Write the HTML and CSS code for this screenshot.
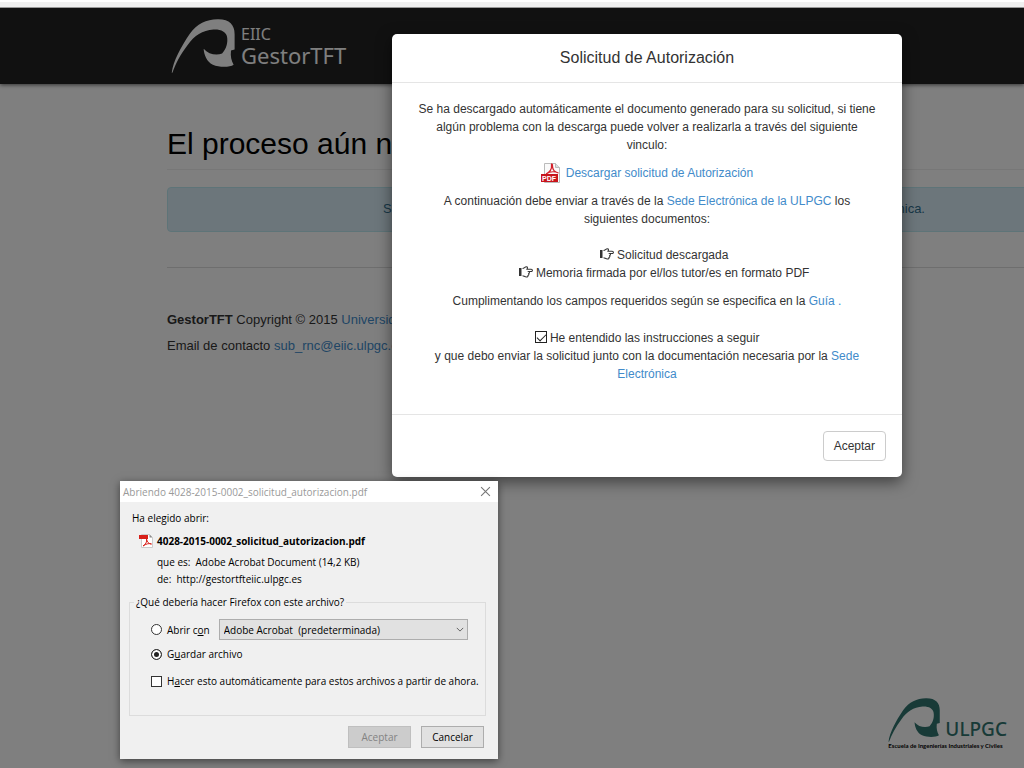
FILE: index.html
```html
<!DOCTYPE html>
<html lang="es">

<head>
    <meta charset="UTF-8">
    <meta name="viewport" content="width=device-width, initial-scale=1.0">
    <title>GestorTFT</title>
    <link rel="stylesheet" href="styles.css">
</head>

<body>
    <svg class="symbols" aria-hidden="true">
        <symbol id="swoosh" viewBox="0 0 192 164">
            <path d="M1 163 C6 128 28 86 56 45 C78 14 106 2 140 1 C176 0 192 18 192 46 V93 L181 96 C179 114 182 127 189 139 C178 147 146 148 126 139 C107 129 99 108 98 90 C112 107 136 112 154 105 C168 90 172 70 169 54 C166 39 151 31 128 32 C94 34 70 51 50 78 C27 108 13 136 3 163 Z"/>
        </symbol>
        <symbol id="hand" viewBox="0 0 14 12">
            <path d="M0 2h2.500v8H0z"/>
            <path d="M3.500 2.500 C5.500 2.500 5.500 .8 7.500 .8 C8.800 .8 8.600 2.200 8 3.300 H12.200 C13.800 3.300 13.800 5.500 12.200 5.500 H9.800 C10.800 6.200 10.500 7.300 9.700 7.600 C10.100 8.500 9.700 9.100 9 9.400 C9.200 10.500 8.500 11 7.500 11 C5.500 11 5 9.700 3.500 9.700" fill="none" stroke="currentColor" stroke-width="1.100"/>
        </symbol>
    </svg>

    <div class="browser-edge"></div>

    <div class="page">
        <header class="navbar">
            <a class="brand" href="#">
                <svg class="brand-logo"><use href="#swoosh"/></svg>
                <span class="brand-text"><span class="brand-school">EIIC</span><span class="brand-name">GestorTFT</span></span>
            </a>
        </header>

        <main class="container">
            <h1>El proceso aún no ha finalizado</h1>
            <div class="alert">Siga las instrucciones y entregue la documentación requerida a través de la Sede Electrónica.</div>
            <footer class="footer">
                <p><b>GestorTFT</b> Copyright © 2015 <a href="#">Universidad de Las Palmas de Gran Canaria</a></p>
                <p>Email de contacto <a href="#">sub_rnc@eiic.ulpgc.es</a></p>
            </footer>
        </main>

        <div class="school">
            <div class="school-mark">
                <svg class="school-logo"><use href="#swoosh"/></svg>
                <span>ULPGC</span>
            </div>
            <div class="school-name">Escuela de Ingenierías Industriales y Civiles</div>
        </div>

        <div class="backdrop"></div>
    </div>

    <section class="modal" role="dialog" aria-labelledby="modalTitle">
        <h4 class="modal-header" id="modalTitle">Solicitud de Autorización</h4>
        <div class="modal-body">
            <p>Se ha descargado automáticamente el documento generado para su solicitud, si tiene algún problema con la descarga puede volver a realizarla a través del siguiente<br>vinculo:</p>
            <p class="download">
                <svg class="pdf-icon" viewBox="0 0 20 20">
                    <path d="M3.500 .5h11l4 4v15h-15z" fill="#fafafa" stroke="#bbb"/>
                    <path d="M14.500 .5v4h4" fill="#ddd" stroke="#bbb"/>
                    <path d="M5 11 C9 9 11 6 10.500 2 C10 .5 12 .5 11.500 3 C11.500 6 13 9 17.500 10 C13 8 8 9 5 11z" fill="none" stroke="#d3202a" stroke-width="1.200"/>
                    <path d="M0 11h17v8H0z" fill="#c8131c"/>
                    <text x="1" y="18" class="pdf-label">PDF</text>
                </svg>
                <a href="#">Descargar solicitud de Autorización</a>
            </p>
            <p>A continuación debe enviar a través de la <a href="#">Sede Electrónica de la ULPGC</a> los<br>siguientes documentos:</p>
            <ul class="documents">
                <li><svg class="icon"><use href="#hand"/></svg> Solicitud descargada</li>
                <li><svg class="icon"><use href="#hand"/></svg> Memoria firmada por el/los tutor/es en formato PDF</li>
            </ul>
            <p>Cumplimentando los campos requeridos según se especifica en la <a href="#">Guía .</a></p>
            <p class="confirm">
                <input type="checkbox" id="understood" class="check" checked>
                <label for="understood">He entendido las instrucciones a seguir</label><br>
                y que debo enviar la solicitud junto con la documentación necesaria por la <a href="#">Sede<br>Electrónica</a>
            </p>
        </div>
        <div class="modal-footer">
            <button type="button" class="btn">Aceptar</button>
        </div>
    </section>

    <section class="dialog" role="dialog" aria-labelledby="dialogTitle">
        <div class="dialog-title">
            <span id="dialogTitle">Abriendo 4028-2015-0002_solicitud_autorizacion.pdf</span>
            <button type="button" class="close" aria-label="Cerrar">
                <svg viewBox="0 0 10 10"><path d="M1 1l8 8M9 1l-8 8"/></svg>
            </button>
        </div>
        <form class="dialog-body">
            <div>Ha elegido abrir:</div>
            <div class="file">
                <svg class="file-icon" viewBox="0 0 14 14">
                    <path d="M2.500 .5h8l3 3v10h-11z" fill="#fff" stroke="#ccc"/>
                    <path d="M10.500 .5v3h3z" fill="#8c8c8c"/>
                    <path d="M0 1h9v4H0z" fill="#d8201a"/>
                    <path d="M4 12 C7 10 8 8 7.500 5 C8 8 10 10 12.500 10 C9.500 9 7 10 4 12z" fill="none" stroke="#d8201a"/>
                </svg>
                <div class="file-info">
                    <b>4028-2015-0002_solicitud_autorizacion.pdf</b>
                    <div class="file-row"><span>que es:</span><span>Adobe Acrobat Document (14,2 KB)</span></div>
                    <div class="file-row"><span>de:</span><span>http://gestortfteiic.ulpgc.es</span></div>
                </div>
            </div>
            <fieldset>
                <legend>¿Qué debería hacer Firefox con este archivo?</legend>
                <div class="option">
                    <input type="radio" name="action" id="open" class="radio">
                    <label for="open">Abrir c<u>o</u>n</label>
                    <div class="select">
                        <select id="program" aria-label="Programa">
                            <option>Adobe Acrobat&nbsp; (predeterminada)</option>
                        </select>
                        <svg viewBox="0 0 10 6"><path d="M1 1l4 4 4-4"/></svg>
                    </div>
                </div>
                <div class="option">
                    <input type="radio" name="action" id="save" class="radio" checked>
                    <label for="save">G<u>u</u>ardar archivo</label>
                </div>
                <div class="option option-auto">
                    <input type="checkbox" id="auto" class="box">
                    <label for="auto">H<u>a</u>cer esto automáticamente para estos archivos a partir de ahora.</label>
                </div>
            </fieldset>
            <div class="dialog-buttons">
                <button type="button" disabled>Aceptar</button>
                <button type="button">Cancelar</button>
            </div>
        </form>
    </section>
</body>

</html>
```
FILE: styles.css
```css
* {
    box-sizing: border-box;
}

body {
    margin: 0;
    min-height: 100vh;
    display: flex;
    flex-direction: column;
    overflow: hidden;
    font-family: "Liberation Sans", Arial, sans-serif;
    font-size: 13px;
    line-height: 18px;
    color: #333;
}

a {
    color: #428bca;
    text-decoration: none;
}

p {
    margin: 0 0 10px;
}

.symbols {
    position: absolute;
    width: 0;
    height: 0;
}

.browser-edge {
    height: 8px;
    background-color: #f0f0f0;
    border-top: 2px solid #fff;
    border-bottom: 1px solid #999;
}

/* page under the modal */
.page {
    position: relative;
    flex: 1;
    display: flex;
    flex-direction: column;
    overflow: hidden;
    background-color: #fff;
}

.backdrop {
    position: absolute;
    inset: 0;
    background-color: rgba(0, 0, 0, 0.5);
}

.navbar {
    padding: 11px 0 11px 171px;
    background-color: #222;
    box-shadow: 0 1px 4px rgba(0, 0, 0, 0.6);
}

.brand {
    display: flex;
    gap: 6px;
    color: #fff;
    fill: #fff;
    font-family: "Noto Sans", sans-serif;
}

.brand-logo {
    width: 64px;
    height: 54px;
}

.brand-text {
    display: flex;
    flex-direction: column;
    padding-top: 6px;
}

.brand-school {
    font-size: 16px;
    line-height: 19px;
}

.brand-name {
    font-size: 22px;
    line-height: 22px;
}

/* the content runs on past the right edge of a narrow window */
.container {
    min-width: 974px;
    margin-left: 167px;
}

h1 {
    margin: 41px 0 17px;
    padding-bottom: 6px;
    border-bottom: 1px solid #eee;
    font-size: 30px;
    font-weight: normal;
    line-height: 38px;
    color: #000;
}

.alert {
    padding: 12px 13px 13px;
    border: 1px solid #bce8f1;
    border-radius: 4px;
    background-color: #d9edf7;
    color: #31708f;
    text-align: center;
}

.footer {
    margin-top: 35px;
    padding-top: 43px;
    border-top: 1px solid #ddd;
}

.footer p {
    margin-bottom: 8px;
}

.school {
    align-self: flex-end;
    margin: auto 17px 18px 0;
    font-family: "Noto Sans", sans-serif;
    color: #000;
}

.school-mark {
    display: flex;
    align-items: flex-end;
    gap: 5px;
    height: 42px;
    color: #30746f;
    fill: #30746f;
    font-size: 19px;
    font-weight: 500;
    line-height: 25px;
}

.school-logo {
    width: 52px;
    height: 44px;
}

.school-name {
    font-family: Lato, sans-serif;
    font-size: 6px;
    font-weight: bold;
    line-height: 8px;
    white-space: nowrap;
}

/* bootstrap-like modal */
.modal {
    position: absolute;
    top: 34px;
    left: 392px;
    width: 100%;
    max-width: 510px;
    background-color: #fff;
    border-radius: 5px;
    box-shadow: 0 5px 15px rgba(0, 0, 0, 0.5);
    font-size: 12px;
    text-align: center;
}

.modal-header {
    margin: 0;
    padding: 14px;
    border-bottom: 1px solid #e5e5e5;
    font-size: 16px;
    font-weight: normal;
    line-height: 20px;
}

.modal-body {
    padding: 17px 16px 21px;
}

.download {
    display: flex;
    justify-content: center;
    align-items: center;
    gap: 5px;
    height: 18px;
}

.pdf-icon {
    width: 20px;
    height: 20px;
}

.pdf-label {
    fill: #fff;
    font-size: 7px;
    font-weight: bold;
}

.documents {
    margin: 18px 0 10px;
    padding: 0 0 0 34px;
    list-style: none;
}

.icon {
    width: 14px;
    height: 12px;
    vertical-align: -1px;
    fill: currentColor;
}

.confirm {
    margin-top: 19px;
}

.check {
    appearance: none;
    position: relative;
    width: 12px;
    height: 12px;
    margin: 0;
    border: 1px solid #222;
    vertical-align: -1px;
}

.check:checked::after {
    content: "";
    position: absolute;
    left: 3px;
    top: 0;
    width: 4px;
    height: 8px;
    border: solid #222;
    border-width: 0 1px 1px 0;
    transform: rotate(45deg);
}

.modal-footer {
    padding: 16px;
    border-top: 1px solid #e5e5e5;
    text-align: right;
}

.btn {
    padding: 5px 10px;
    border: 1px solid #ccc;
    border-radius: 4px;
    background-color: #fff;
    color: #333;
    font: inherit;
}

/* browser download dialog */
.dialog {
    position: absolute;
    top: 481px;
    left: 120px;
    width: 378px;
    background-color: #f0f0f0;
    box-shadow: 0 2px 8px rgba(0, 0, 0, 0.5);
    font-family: "Open Sans", sans-serif;
    font-size: 10px;
    line-height: 14px;
    color: #000;
}

.dialog-title {
    display: flex;
    justify-content: space-between;
    align-items: center;
    height: 21px;
    padding: 0 7px 0 3px;
    background-color: #fff;
    color: #999;
}

.close {
    display: flex;
    padding: 0;
    border: 0;
    background: none;
}

.close svg {
    width: 11px;
    height: 11px;
    fill: none;
    stroke: #777;
}

.dialog-body {
    padding: 9px 12px 11px;
}

.file {
    display: flex;
    gap: 4px;
    margin: 9px 0 9px 7px;
}

.file-icon {
    width: 14px;
    height: 14px;
}

.file-info {
    display: flex;
    flex-direction: column;
    gap: 4px;
}

.file-info b {
    margin-bottom: 4px;
}

.file-row {
    display: flex;
    gap: 5px;
    line-height: 13px;
}

fieldset {
    min-width: 0;
    height: 121px;
    margin: 0 0 10px -3px;
    padding: 10px 17px 0 21px;
    border: 1px solid #dcdcdc;
}

legend {
    margin-left: -17px;
    padding: 0 2px;
}

.option {
    display: flex;
    align-items: center;
    gap: 5px;
    margin-bottom: 7px;
    white-space: nowrap;
}

.option-auto {
    margin-top: 13px;
}

.radio,
.box {
    appearance: none;
    flex: none;
    width: 11px;
    height: 11px;
    margin: 0;
    border: 1px solid #333;
    background-color: #fff;
}

.radio {
    border-radius: 50%;
}

.radio:checked {
    background-color: #222;
    box-shadow: inset 0 0 0 2px #fff;
}

.select {
    flex: 1;
    display: grid;
    align-items: center;
    margin-left: 4px;
}

.select select,
.select svg {
    grid-area: 1 / 1;
}

.select select {
    appearance: none;
    width: 100%;
    height: 21px;
    padding: 0 4px;
    border: 1px solid #adadad;
    border-radius: 0;
    background-color: #e1e1e1;
    color: #000;
    font: inherit;
}

.select svg {
    justify-self: end;
    width: 8px;
    height: 5px;
    margin-right: 4px;
    fill: none;
    stroke: #444;
    pointer-events: none;
}

.dialog-buttons {
    display: flex;
    justify-content: flex-end;
    gap: 10px;
    padding-right: 2px;
}

.dialog-buttons button {
    width: 63px;
    height: 22px;
    padding: 0;
    border: 1px solid #adadad;
    background-color: #e1e1e1;
    color: #000;
    font: inherit;
}

.dialog-buttons button:disabled {
    border-color: #bfbfbf;
    background-color: #ccc;
    color: #838383;
}
```
